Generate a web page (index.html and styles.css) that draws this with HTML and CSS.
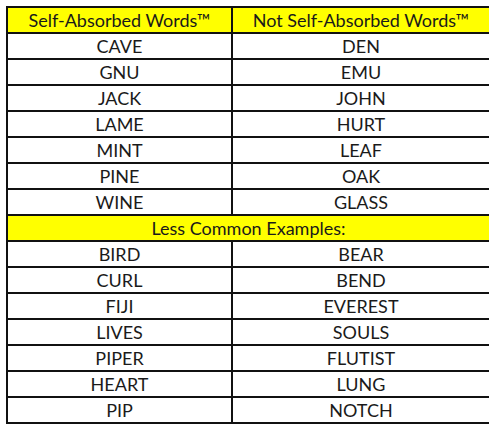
FILE: index.html
```html
<!DOCTYPE html>
<html>
<head>
<meta charset="utf-8">
<link rel="stylesheet" href="styles.css">
</head>
<body>
<div class="table">
  <div class="cell head">Self-Absorbed Words™</div>
  <div class="cell head">Not Self-Absorbed Words™</div>
  <div class="cell">CAVE</div><div class="cell">DEN</div>
  <div class="cell">GNU</div><div class="cell">EMU</div>
  <div class="cell">JACK</div><div class="cell">JOHN</div>
  <div class="cell">LAME</div><div class="cell">HURT</div>
  <div class="cell">MINT</div><div class="cell">LEAF</div>
  <div class="cell">PINE</div><div class="cell">OAK</div>
  <div class="cell">WINE</div><div class="cell">GLASS</div>
  <div class="cell head span">Less Common Examples:</div>
  <div class="cell">BIRD</div><div class="cell">BEAR</div>
  <div class="cell">CURL</div><div class="cell">BEND</div>
  <div class="cell">FIJI</div><div class="cell">EVEREST</div>
  <div class="cell">LIVES</div><div class="cell">SOULS</div>
  <div class="cell">PIPER</div><div class="cell">FLUTIST</div>
  <div class="cell">HEART</div><div class="cell">LUNG</div>
  <div class="cell">PIP</div><div class="cell">NOTCH</div>
</div>
</body>
</html>
```
FILE: styles.css
```css
html, body {
  margin: 0;
  padding: 0;
  background: #ffffff;
}
body {
  padding: 6px 0 0 6px;
  font-family: Lato, "Noto Sans", sans-serif;
}
.table {
  display: grid;
  grid-template-columns: 223px 256px;
  grid-auto-rows: 24px;
  gap: 2px;
  padding: 2px;
  background: #111111;
  width: 479px;
}
.cell {
  background: #ffffff;
  color: #1a1a1a;
  font-size: 18px;
  display: flex;
  align-items: center;
  justify-content: center;
  line-height: 1;
}
.head {
  background: #ffff00;
}
.span {
  grid-column: 1 / span 2;
}
```
